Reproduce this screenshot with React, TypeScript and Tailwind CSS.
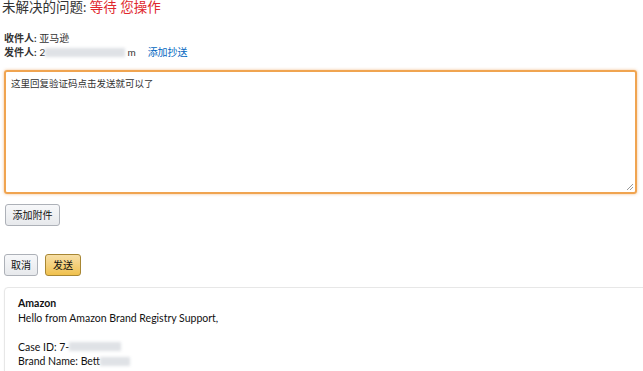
import React from 'react'

const font = { fontFamily: '"Lato", "Noto Sans CJK SC", sans-serif' }

// Blurred placeholder for redacted text
const Redacted = ({ w }: { w: number }) => (
  <span
    className="inline-block align-middle h-[9px] bg-gray-300/70 blur-[1.5px]"
    style={{ width: w }}
  />
)

export default function App() {
  return (
    <div className="w-[643px] h-[371px] overflow-hidden bg-white text-[#333] flex flex-col items-start" style={font}>
      {/* Header */}
      <div className="pl-[2px] h-[16px] -mt-[1px] text-[13.5px] leading-[16px]">
        <span className="text-[#333]">未解决的问题:</span>{' '}
        <span className="text-[#e0282e]">等待 您操作</span>
      </div>

      {/* Recipients */}
      <div className="pl-[4px] mt-[16px] text-[10px] leading-[14px]">
        <div>
          <span className="font-bold">收件人:</span> 亚马逊
        </div>
        <div className="flex items-center">
          <span className="font-bold">发件人:</span>
          <span className="ml-[3px]">2</span>
          <Redacted w={80} />
          <span className="ml-[2px]">m</span>
          <span className="ml-[12px] text-[#0066c0]">添加抄送</span>
        </div>
      </div>

      {/* Reply box */}
      <div className="ml-[4px] mt-[11px] w-[633px] h-[124px] shrink-0 rounded-[3px] border-2 border-[#f0a450] shadow-[0_0_3px_rgba(228,121,17,0.5)] relative">
        <div className="px-[5px] pt-[5px] text-[9.5px] leading-[14px] text-[#333]">
          这里回复验证码点击发送就可以了
        </div>
        <svg className="absolute right-[1px] bottom-[1px]" width="8" height="8" viewBox="0 0 8 8">
          <path d="M7 1L1 7M7 4L4 7" stroke="#999" strokeWidth="1" />
        </svg>
      </div>

      {/* Attach */}
      <button className="ml-[5px] mt-[10px] h-[22px] w-[55px] shrink-0 rounded-[3px] border border-[#adb1b8] bg-gradient-to-b from-[#f7f8fa] to-[#e7e9ec] text-[10px] text-[#111] leading-none">
        添加附件
      </button>

      {/* Actions */}
      <div className="ml-[4px] mt-[28px] flex gap-[7px] shrink-0">
        <button className="h-[22px] w-[34px] rounded-[3px] border border-[#adb1b8] bg-gradient-to-b from-[#f7f8fa] to-[#e7e9ec] text-[10px] text-[#111] leading-none">
          取消
        </button>
        <button className="h-[22px] w-[36px] rounded-[3px] border border-[#a88734] bg-gradient-to-b from-[#f7dfa5] to-[#f0c14b] text-[10px] text-[#111] leading-none">
          发送
        </button>
      </div>

      {/* Message card */}
      <div className="ml-[4px] mt-[11px] w-[650px] shrink-0 rounded-[4px] border border-[#e7e7e7] shadow-[0_1px_2px_rgba(0,0,0,0.06)] pl-[13px] pt-[8px] pb-[20px] text-[10.5px] leading-[14.5px] text-[#111]">
        <div className="font-bold">Amazon</div>
        <div>Hello from Amazon Brand Registry Support,</div>
        <div className="h-[14.5px]" />
        <div className="flex items-center">
          Case ID: 7-<Redacted w={52} />
        </div>
        <div className="flex items-center">
          Brand Name: Bett<Redacted w={30} />
        </div>
      </div>
    </div>
  )
}
